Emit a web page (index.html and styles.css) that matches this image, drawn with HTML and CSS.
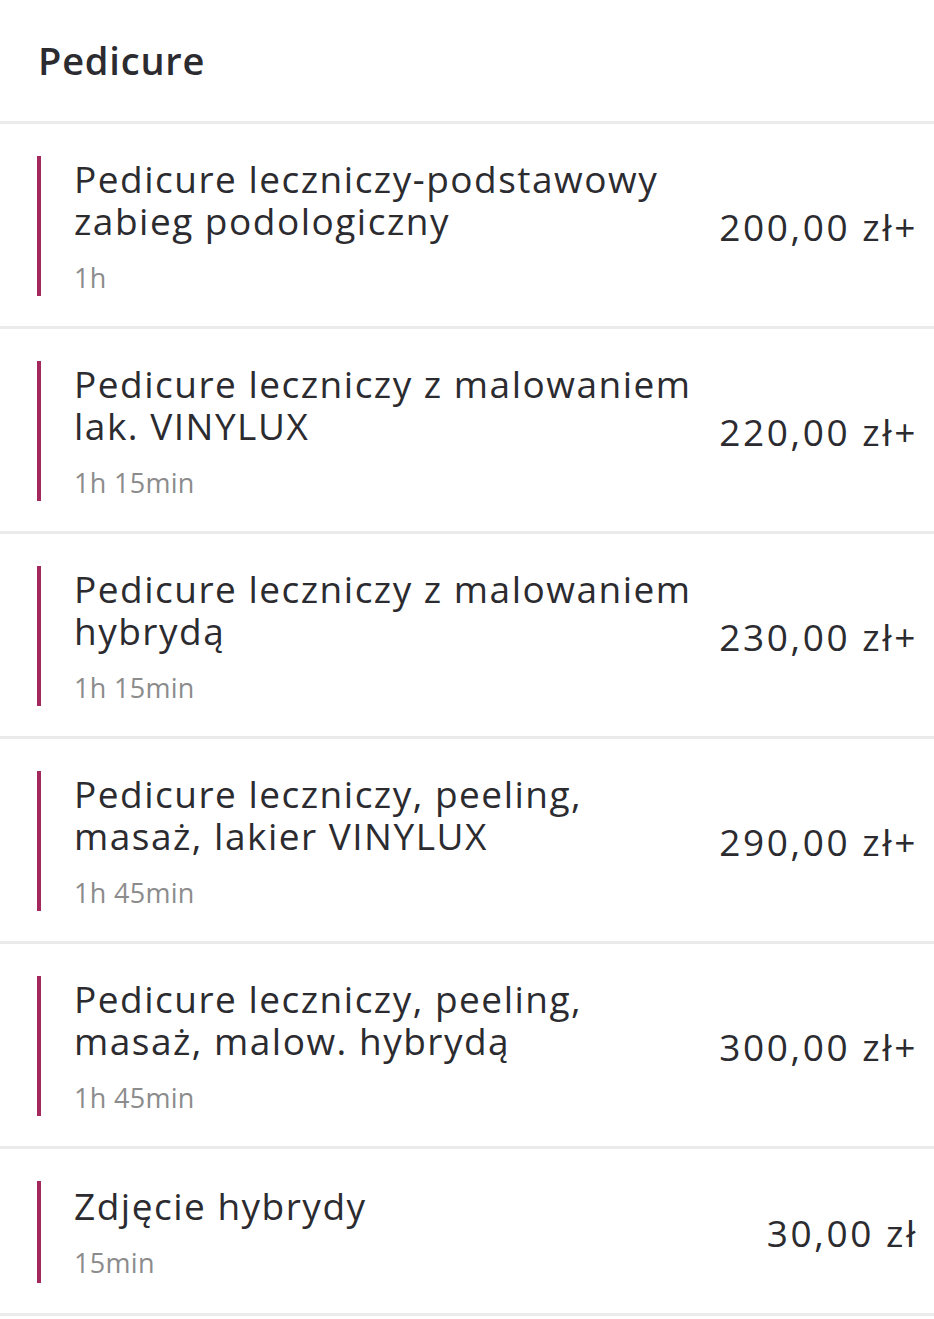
FILE: index.html
```html
<!DOCTYPE html>
<html lang="pl">
<head>
<meta charset="utf-8">
<title>Pedicure</title>
<link rel="stylesheet" href="styles.css">
</head>
<body>
<section class="category">
  <header class="category-header">
    <h2 class="category-title">Pedicure</h2>
  </header>
  <ul class="services">
    <li class="service">
      <div class="service-info">
        <div class="service-name">Pedicure leczniczy-podstawowy zabieg podologiczny</div>
        <div class="service-duration">1h</div>
      </div>
      <div class="service-price">200,00 zł+</div>
    </li>
    <li class="service">
      <div class="service-info">
        <div class="service-name">Pedicure leczniczy z malowaniem lak. VINYLUX</div>
        <div class="service-duration">1h 15min</div>
      </div>
      <div class="service-price">220,00 zł+</div>
    </li>
    <li class="service">
      <div class="service-info">
        <div class="service-name">Pedicure leczniczy z malowaniem hybrydą</div>
        <div class="service-duration">1h 15min</div>
      </div>
      <div class="service-price">230,00 zł+</div>
    </li>
    <li class="service">
      <div class="service-info">
        <div class="service-name">Pedicure leczniczy, peeling, masaż, lakier VINYLUX</div>
        <div class="service-duration">1h 45min</div>
      </div>
      <div class="service-price">290,00 zł+</div>
    </li>
    <li class="service">
      <div class="service-info">
        <div class="service-name">Pedicure leczniczy, peeling, masaż, malow. hybrydą</div>
        <div class="service-duration">1h 45min</div>
      </div>
      <div class="service-price">300,00 zł+</div>
    </li>
    <li class="service service--single">
      <div class="service-info">
        <div class="service-name">Zdjęcie hybrydy</div>
        <div class="service-duration">15min</div>
      </div>
      <div class="service-price">30,00 zł</div>
    </li>
  </ul>
</section>
</body>
</html>
```

FILE: styles.css
```css
* { box-sizing: border-box; }

html, body {
  margin: 0;
  padding: 0;
  background: #ffffff;
}

body {
  font-family: "Open Sans", "Noto Sans", sans-serif;
  color: #2b2b30;
}

.category-header {
  height: 121px;
  padding: 0 38px;
  display: flex;
  align-items: center;
  border-bottom: 3px solid #ebebeb;
  box-sizing: content-box;
}

.category-title {
  margin: 0 0 2px;
  font-size: 38px;
  font-weight: 600;
  line-height: 48px;
  letter-spacing: 0.8px;
}

.services {
  list-style: none;
  margin: 0;
  padding: 0;
}

.service {
  display: flex;
  align-items: center;
  padding: 32px 18px 30px 37px;
  border-bottom: 3px solid #ebebeb;
}

.service-info {
  flex: 1;
  border-left: 4px solid #a3285e;
  padding: 2px 0 3px 33px;
  max-width: 664px;
}

.service--single .service-info {
  padding-top: 4px;
  padding-bottom: 5px;
}

.service--single {
  padding-bottom: 30px;
}

.service-name {
  font-size: 37px;
  line-height: 42px;
  letter-spacing: 1.5px;
}

.service-duration {
  margin-top: 21px;
  font-size: 27px;
  line-height: 30px;
  color: #8c8c8c;
  letter-spacing: 0.3px;
}

.service-price {
  margin-left: auto;
  font-size: 37px;
  letter-spacing: 2.6px;
  margin-right: -2px;
  white-space: nowrap;
}
```
